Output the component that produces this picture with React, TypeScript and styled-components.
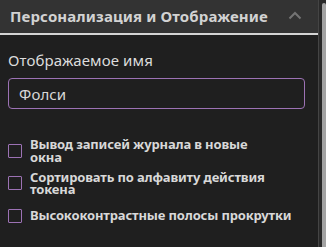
import React from "react";
import styled, { createGlobalStyle } from "styled-components";

const Global = createGlobalStyle`
  html, body {
    margin: 0;
    padding: 0;
    background: #1f1f1f;
    overflow: hidden;
  }
  body {
    font-family: "Noto Sans", "Open Sans", sans-serif;
  }
`;

const Frame = styled.div`
  display: flex;
  width: 326px;
  height: 247px;
  background: #1f1f1f;
`;

const Panel = styled.div`
  flex: 0 0 318px;
  display: flex;
  flex-direction: column;
`;

const Header = styled.div`
  display: flex;
  align-items: center;
  justify-content: space-between;
  height: 33px;
  padding: 0 16px 2px 10px;
  box-sizing: border-box;
  background: #333333;
  border-bottom: 2px solid #d4d4d4;
  height: 35px;
`;

const Title = styled.div`
  color: #d2d2d2;
  font-size: 15px;
  font-weight: 700;
  letter-spacing: 0.12px;
`;

const Body = styled.div`
  display: flex;
  flex-direction: column;
  padding: 15px 13px 0 8px;
`;

const Label = styled.div`
  color: #dcdcdc;
  font-size: 15px;
  line-height: 20px;
  letter-spacing: 0.12px;
`;

const Input = styled.div`
  margin-top: 8px;
  height: 31px;
  box-sizing: border-box;
  border: 1px solid #9c72b4;
  border-radius: 4px;
  display: flex;
  align-items: center;
  padding-left: 10px;
  color: #d8d8d8;
  font-size: 15px;
  letter-spacing: 0.12px;
`;

const Options = styled.div`
  display: flex;
  flex-direction: column;
  gap: 4.5px;
  margin-top: 27.5px;
`;

const Option = styled.label`
  display: flex;
  align-items: center;
  gap: 8px;
  min-height: 28px;
`;

const Box = styled.span`
  flex: 0 0 14px;
  width: 14px;
  height: 14px;
  box-sizing: border-box;
  border: 1px solid #9c72b4;
  border-radius: 1px;
`;

const OptionText = styled.span`
  color: #d8d8d8;
  font-size: 13px;
  font-weight: 700;
  line-height: 12.5px;
  letter-spacing: -0.15px;
  white-space: pre-line;
`;

const Track = styled.div`
  flex: 1;
  display: flex;
  justify-content: flex-end;
  border-left: 1px solid #444444;
  background: #2a2a2a;
`;

const Thumb = styled.div`
  width: 4px;
  margin-top: 3px;
  background: #a3a3a3;
  border-radius: 2px 2px 0 0;
`;

const Chevron = () => (
  <svg width="14" height="9" viewBox="0 0 14 9" fill="none">
    <path d="M1.5 7.5 L7 2 L12.5 7.5" stroke="#747474" strokeWidth="2" />
  </svg>
);

const options = [
  "Вывод записей журнала в новые\nокна",
  "Сортировать по алфавиту действия\nтокена",
  "Высококонтрастные полосы прокрутки",
];

export default function App() {
  return (
    <>
      <Global />
      <Frame>
        <Panel>
          <Header>
            <Title>Персонализация и Отображение</Title>
            <Chevron />
          </Header>
          <Body>
            <Label>Отображаемое имя</Label>
            <Input>Фолси</Input>
            <Options>
              {options.map((o) => (
                <Option key={o}>
                  <Box />
                  <OptionText>{o}</OptionText>
                </Option>
              ))}
            </Options>
          </Body>
        </Panel>
        <Track>
          <Thumb />
        </Track>
      </Frame>
    </>
  );
}
